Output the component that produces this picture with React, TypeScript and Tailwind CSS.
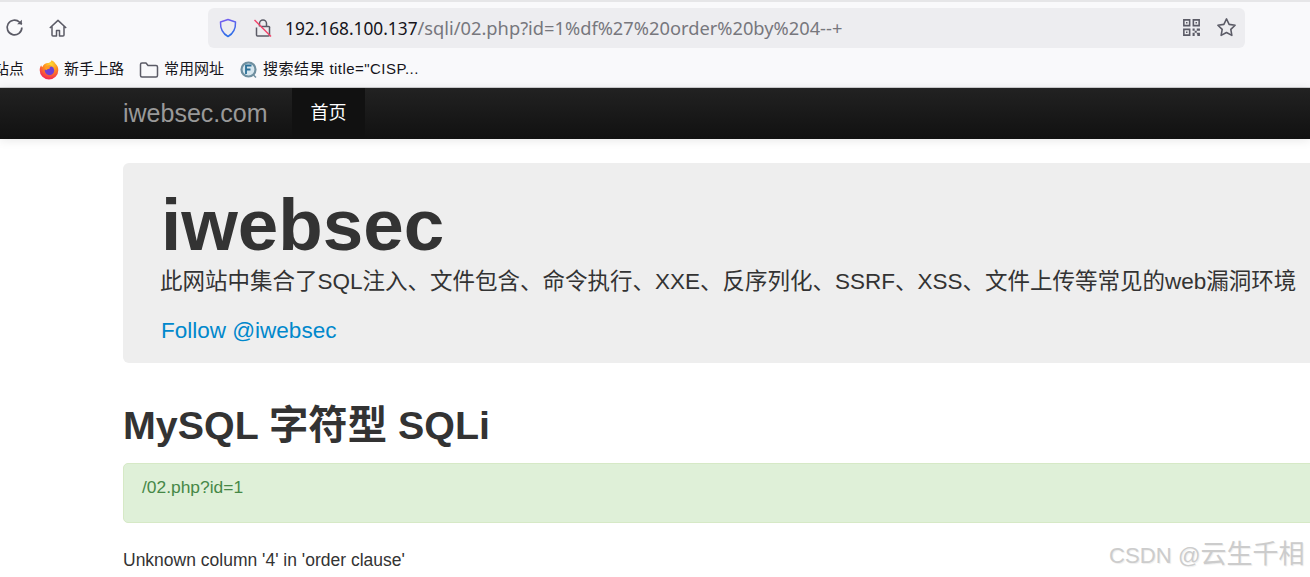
const App = () => {
  return (
    <div className="relative h-[577px] w-[1310px] overflow-hidden bg-white font-['Liberation_Sans','Noto_Sans_CJK_SC',sans-serif] text-[#333]">
      {/* browser chrome */}
      <div className="h-[2px] bg-[#e6e6e8]" />
      <div className="h-[85px] bg-[#f9f9fb] border-b border-[#cfcfd1] box-content">
        <div className="flex h-[50px] items-center pl-[4px] pt-[1px]">
          <svg width="21" height="21" viewBox="0 0 20 20" fill="none" stroke="#5b5b66" strokeWidth="1.6">
            <path d="M17 10a7 7 0 1 1-2.1-5L17 7" />
            <path d="M17 2.500V7h-4.500" fill="#5b5b66" stroke="none" />
          </svg>
          <svg width="20" height="20" viewBox="0 0 20 20" fill="none" stroke="#5b5b66" strokeWidth="1.5" className="ml-[23px]">
            <path d="M1.800 10 10 2.400 18.200 10M4 8.500V17a1 1 0 0 0 1 1h3.500v-5.500h3V18H15a1 1 0 0 0 1-1V8.500" strokeLinejoin="round" />
          </svg>
          <div className="ml-[140px] flex h-[40px] w-[1037px] items-center rounded-md bg-[#ededf0]">
            <svg width="20" height="20" viewBox="0 0 20 20" fill="none" strokeWidth="1.5" className="ml-[10px]">
              <defs>
                <linearGradient id="shield" x1="0" y1="0" x2="0.3" y2="1">
                  <stop offset="0" stopColor="#7a5cf0" />
                  <stop offset="1" stopColor="#2f6fe8" />
                </linearGradient>
              </defs>
              <path d="M10 1.500 17.500 4c.3 7-2 11.500-7.500 14.500C4.500 15.500 2.200 11 2.500 4L10 1.500Z" stroke="url(#shield)" strokeLinejoin="round" />
            </svg>
            <svg width="20" height="20" viewBox="0 0 20 20" fill="none" className="ml-[15px]">
              <path d="M6.500 8.500V5.500a3.500 3.500 0 0 1 7 0v3M3.500 9.500v7.500a1 1 0 0 0 1 1h11a1 1 0 0 0 1-1V10a1 1 0 0 0-1-1.500H8" stroke="#5b5b66" strokeWidth="1.500" />
              <path d="M1.500 2 18 18.500" stroke="#f0436a" strokeWidth="1.500" />
            </svg>
            <div className="ml-[12px] flex items-baseline whitespace-nowrap font-['Noto_Sans',sans-serif]">
              <span className="text-[17.300px] text-[#15141a]">192.168.100.137</span>
              <span className="text-[18.300px] text-[#77777d]">/sqli/02.php?id=1%df%27%20order%20by%204--+</span>
            </div>
            <div className="ml-auto mr-[8px] flex items-center gap-[15px]">
              <svg width="19" height="19" viewBox="0 0 18 18" fill="#5b5b66">
                <path fillRule="evenodd" d="M1 1h7v7H1V1Zm1.500 1.500v4h4v-4h-4ZM10 1h7v7h-7V1Zm1.500 1.500v4h4v-4h-4ZM1 10h7v7H1v-7Zm1.500 1.500v4h4v-4h-4Z" />
                <path d="M3.800 3.800h1.400v1.400H3.800zM12.800 3.800h1.400v1.400h-1.400zM3.800 12.800h1.400v1.400H3.800zM10 10h2v2h-2zM14 10h3v2h-3zM12 12h2v2h-2zM10 14h2v3h-2zM14 14h3v1.500h-3zM14.500 15.500H17V17h-2.500z" />
              </svg>
              <svg width="21" height="21" viewBox="0 0 20 20" fill="none" stroke="#5b5b66" strokeWidth="1.500">
                <path d="M10 1.800 12.500 7l5.700.8-4.100 4 1 5.700-5.100-2.700-5.100 2.700 1-5.700-4.100-4L7.500 7 10 1.800Z" strokeLinejoin="round" />
              </svg>
            </div>
          </div>
        </div>
        <div className="flex h-[35px] items-center whitespace-nowrap text-[15px] text-[#15141a]">
          <span className="-ml-[6px]">站点</span>
          <svg width="20" height="20" viewBox="0 0 20 20" className="ml-[15px]">
            <defs>
              <radialGradient id="fx" cx="0.6" cy="0.2" r="1">
                <stop offset="0" stopColor="#ffdd33" />
                <stop offset="0.4" stopColor="#ff8a1f" />
                <stop offset="0.75" stopColor="#f5324f" />
                <stop offset="1" stopColor="#e31587" />
              </radialGradient>
            </defs>
            <path d="M10 19.500a9.300 9.300 0 0 1-9.300-9.300c0-2 .6-3.600 1.500-5 .2 1 .7 1.500 1.200 1.700C4.500 4 7 2.800 9.500 3c1.500-.5 2.500-1.500 3-2.800 3 1.500 3.500 2.800 3.800 3.300 2 1.800 3 4 3 6.700a9.300 9.300 0 0 1-9.300 9.300Z" fill="url(#fx)" />
            <circle cx="10.500" cy="10.500" r="4.700" fill="#6e3fd6" />
            <path d="M6 7.500c1.500-2 5-2.800 7.500-1-1-.1-2 .2-3 .8 1 .8 0 1.700-1 1.700-.8 0-1.600.5-1.600 1.200L6 9.500Z" fill="#ff9b21" />
          </svg>
          <span className="ml-[5px]">新手上路</span>
          <svg width="20" height="18" viewBox="0 0 20 18" fill="none" stroke="#5b5b66" strokeWidth="1.500" className="ml-[15px]">
            <path d="M1.500 3.500a1.500 1.500 0 0 1 1.500-1.500h4l2 2.500h8a1.500 1.500 0 0 1 1.500 1.500v8.500a1.500 1.500 0 0 1-1.500 1.500H3a1.500 1.500 0 0 1-1.500-1.500V3.500Z" strokeLinejoin="round" />
          </svg>
          <span className="ml-[5px]">常用网址</span>
          <svg width="20" height="20" viewBox="0 0 20 20" fill="none" className="ml-[15px]">
            <circle cx="9.500" cy="9.500" r="7" fill="#d6e6ee" stroke="#6f8f9f" strokeWidth="2.200" />
            <path d="M7 14V5.500h5.500M7 9.500h4.500" stroke="#2a6f96" strokeWidth="1.800" />
            <path d="M14.500 15l2.500 2.500" stroke="#6f8f9f" strokeWidth="1.500" />
          </svg>
          <span className="ml-[4px] tracking-[0.45px]">搜索结果 title="CISP...</span>
        </div>
      </div>

      {/* site navbar */}
      <nav className="flex h-[51px] items-stretch bg-gradient-to-b from-[#222222] to-[#111111] pl-[123px] shadow-[0_1px_10px_rgba(0,0,0,0.1)]">
        <a className="flex w-[169px] items-center pt-[1px] text-[25px] text-[#999999]">iwebsec.com</a>
        <a className="flex w-[73px] items-center justify-center bg-[#111111] text-[18px] text-white">首页</a>
      </nav>

      {/* page content */}
      <main className="w-[1400px] pl-[123px] pt-[24px]">
        <section className="h-[200px] rounded-md bg-[#eeeeee] pl-[38px] pt-[26px]">
          <h1 className="text-[72.800px] font-bold leading-[72px]">iwebsec</h1>
          <p className="-ml-[1px] mt-[4px] whitespace-nowrap text-[22.500px] leading-[34px]">
            此网站中集合了SQL注入、文件包含、命令执行、XXE、反序列化、SSRF、XSS、文件上传等常见的web漏洞环境
          </p>
          <a className="mt-[15px] block text-[22.500px] leading-[34px] text-[#0088cc]">Follow @iwebsec</a>
        </section>
        <h2 className="mt-[38px] text-[39.400px] font-bold leading-[48px]">MySQL 字符型 SQLi</h2>
        <div className="mt-[14px] h-[60px] rounded-[5px] border border-[#d6e9c6] bg-[#dff0d8] pl-[18px] pt-[13px] text-[17.400px] leading-[20px] text-[#468847]">
          /02.php?id=1
        </div>
        <p className="mt-[27px] text-[17.500px] leading-[20px]">Unknown column '4' in 'order clause'</p>
      </main>

      {/* watermark */}
      <div className="absolute left-[1109px] top-[538px] whitespace-nowrap text-[22.200px] leading-[32px] text-[#cccccc] [text-shadow:1px_1px_1px_#eeeeee]">
        CSDN @<span className="text-[26px]">云生千相</span>
      </div>
    </div>
  );
};

export default App;
